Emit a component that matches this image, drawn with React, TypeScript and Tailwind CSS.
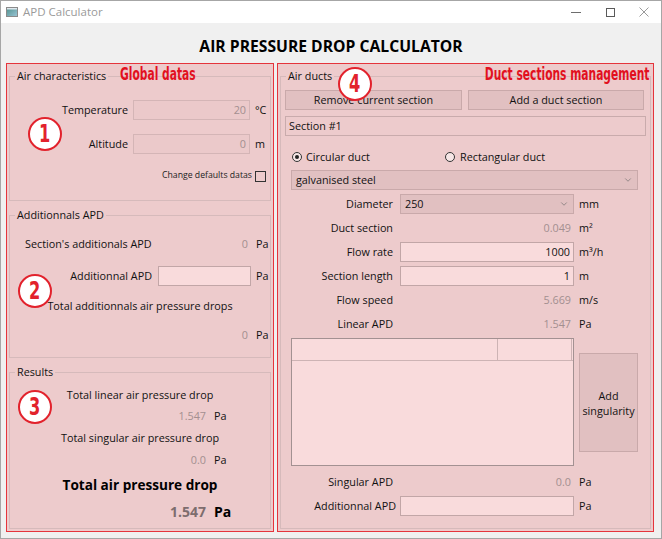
import React from "react";
import { ChevronDown } from "lucide-react";

// annotation bubble drawn over the form
function Bubble({ n, className }: { n: string; className: string }) {
  return (
    <div
      className={`absolute w-[34px] h-[34px] rounded-full border-2 border-[#e2222c] bg-white flex items-center justify-center text-[#e2222c] font-bold text-[24px] leading-none font-['Liberation_Sans_Narrow','DejaVu_Sans_Condensed',sans-serif] ${className}`}
    >
      <span className="scale-x-[0.75]">{n}</span>
    </div>
  );
}

function GroupBox({
  title,
  className = "",
  children,
}: {
  title: string;
  className?: string;
  children?: React.ReactNode;
}) {
  return (
    <fieldset className={`border border-[#d6babb] ${className}`}>
      <legend className="ml-[5px] px-[2px] leading-[16px]">{title}</legend>
      {children}
    </fieldset>
  );
}

const disabledBox =
  "h-[20px] border border-[#d4b5b6] bg-[#ebc9ca] text-right pr-[3px] text-[#a38f90] leading-[18px]";
const editBox =
  "h-[20px] border border-[#c2a6a7] bg-[#f9dbdc] text-right pr-[3px] leading-[18px]";
const comboBox =
  "h-[20px] border border-[#c9a9aa] bg-[#e1c0c1] flex items-center pl-[4px] pr-[4px] leading-[18px]";

export default function App() {
  return (
    <div className="w-[662px] h-[539px] border border-[#a6a6a6] bg-[#f0f0f0] flex flex-col text-[10.8px] text-[#111] font-['Open_Sans','Noto_Sans',sans-serif] overflow-hidden">
      {/* Title bar */}
      <div className="h-[22px] bg-white flex items-center shrink-0">
        <svg width="12" height="10" viewBox="0 0 12 10" className="ml-[5px]">
          <defs>
            <linearGradient id="ic" x1="0" y1="0" x2="1" y2="1">
              <stop offset="0" stopColor="#4d8f8a" />
              <stop offset="1" stopColor="#9cc6d8" />
            </linearGradient>
          </defs>
          <rect x="0.5" y="0.5" width="11" height="9" fill="url(#ic)" stroke="#8a8a8a" />
          <rect x="1" y="1" width="10" height="1.5" fill="#dfe8ee" />
        </svg>
        <span className="ml-[5px] text-[11.5px] text-[#9a9a9a]">APD Calculator</span>
        <div className="flex-1" />
        <div className="w-[34px] h-full flex items-center justify-center">
          <div className="w-[10px] h-px bg-[#6d6d6d]" />
        </div>
        <div className="w-[34px] h-full flex items-center justify-center">
          <div className="w-[9px] h-[9px] border border-[#5a5a5a]" />
        </div>
        <div className="w-[34px] h-full flex items-center justify-center">
          <svg width="10" height="10" viewBox="0 0 10 10">
            <path d="M0.5 0.5 L9.5 9.5 M9.5 0.5 L0.5 9.5" stroke="#9a9a9a" strokeWidth="1" />
          </svg>
        </div>
      </div>

      {/* Heading */}
      <div className="h-[40px] shrink-0 pt-[13px] text-center text-[15.7px] font-bold leading-[20px] text-black">
        AIR PRESSURE DROP CALCULATOR
      </div>

      <div className="flex pl-[5px] gap-[3px]">
        {/* Left column */}
        <div className="relative w-[268px] h-[469px] shrink-0 border border-[#e5343c] bg-[#edcbcc] px-[2px] pt-[4px] flex flex-col gap-[6px]">
          <GroupBox title="Air characteristics" className="h-[133px]">
            <div className="flex items-center h-[20px] mt-[16px]">
              <span className="w-[118px] text-right">Temperature</span>
              <div className={`ml-[5px] w-[117px] ${disabledBox}`}>20</div>
              <span className="ml-[5px]">°C</span>
            </div>
            <div className="flex items-center h-[20px] mt-[14px]">
              <span className="w-[118px] text-right">Altitude</span>
              <div className={`ml-[5px] w-[117px] ${disabledBox}`}>0</div>
              <span className="ml-[5px]">m</span>
            </div>
            <div className="flex items-center justify-end h-[14px] mt-[15px] pr-[4px]">
              <span className="text-[8.7px] text-[#222]">Change defaults datas</span>
              <div className="ml-[3px] w-[11px] h-[11px] border border-[#333]" />
            </div>
          </GroupBox>

          <GroupBox title="Additionnals APD" className="h-[151px]">
            <div className="flex items-center h-[20px] mt-[11px]">
              <span className="flex-1 pl-[15px]">Section's additionals APD</span>
              <span className="pr-[3px] text-[#a38f90]">0</span>
              <span className="ml-[5px] w-[14px]">Pa</span>
            </div>
            <div className="flex items-center justify-end h-[20px] mt-[12px]">
              <span>Additionnal APD</span>
              <div className={`ml-[6px] w-[93px] ${editBox}`} />
              <span className="ml-[5px] w-[14px]">Pa</span>
            </div>
            <div className="h-[16px] mt-[12px] leading-[16px] text-center">
              Total additionnals air pressure drops
            </div>
            <div className="flex items-center justify-end h-[20px] mt-[11px]">
              <span className="pr-[3px] text-[#a38f90]">0</span>
              <span className="ml-[5px] w-[14px]">Pa</span>
            </div>
          </GroupBox>

          <GroupBox title="Results" className="h-[165px]">
            <div className="h-[16px] mt-[7px] leading-[16px] text-center">
              Total linear air pressure drop
            </div>
            <div className="flex items-center justify-end h-[16px] mt-[5px] pr-[42px]">
              <span className="text-[#a38f90]">1.547</span>
              <span className="ml-[8px] w-[14px]">Pa</span>
            </div>
            <div className="h-[16px] mt-[6px] leading-[16px] text-center">
              Total singular air pressure drop
            </div>
            <div className="flex items-center justify-end h-[16px] mt-[6px] pr-[42px]">
              <span className="text-[#a38f90]">0.0</span>
              <span className="ml-[8px] w-[14px]">Pa</span>
            </div>
            <div className="h-[20px] mt-[7px] leading-[20px] text-center text-[13.6px] font-bold text-black">
              Total air pressure drop
            </div>
            <div className="flex items-center justify-end h-[20px] mt-[6px] pr-[40px] text-[14px] font-bold">
              <span className="text-[#7d6d6e]">1.547</span>
              <span className="ml-[8px] w-[16px] text-black">Pa</span>
            </div>
          </GroupBox>

          <span className="absolute left-[113px] top-[0px] origin-left scale-x-[0.66] whitespace-nowrap text-[18px] leading-[20px] font-bold text-[#e2101e] font-['Liberation_Sans_Narrow','DejaVu_Sans_Condensed',sans-serif]">
            Global datas
          </span>
          <Bubble n="1" className="left-[21px] top-[53px]" />
          <Bubble n="2" className="left-[11px] top-[210px]" />
          <Bubble n="3" className="left-[11px] top-[326px]" />
        </div>

        {/* Right column */}
        <div className="relative w-[377px] h-[469px] shrink-0 border border-[#e5343c] bg-[#edcbcc] px-[2px] pt-[4px]">
          <GroupBox title="Air ducts" className="h-[461px]">
            <div className="flex mt-[6px] pl-[4px]">
              <div className="w-[177px] h-[20px] border border-[#c9a9aa] bg-[#e1c0c1] text-center leading-[18px]">
                Remove current section
              </div>
              <div className="ml-[6px] w-[176px] h-[20px] border border-[#c9a9aa] bg-[#e1c0c1] text-center leading-[18px]">
                Add a duct section
              </div>
            </div>
            <div className="ml-[4px] mt-[6px] w-[361px] h-[20px] border border-[#c9abac] pl-[3px] leading-[18px]">
              Section #1
            </div>

            <div className="flex items-center h-[16px] mt-[13px] pl-[11px]">
              <div className="w-[153px] flex items-center">
                <div className="w-[10px] h-[10px] rounded-full border border-[#333] bg-[#f6e6e6] flex items-center justify-center">
                  <div className="w-[4px] h-[4px] rounded-full bg-[#222]" />
                </div>
                <span className="ml-[4px]">Circular duct</span>
              </div>
              <div className="w-[10px] h-[10px] rounded-full border border-[#333] bg-[#f6e6e6]" />
              <span className="ml-[5px]">Rectangular duct</span>
            </div>

            <div className={`ml-[10px] mt-[5px] w-[347px] ${comboBox}`}>
              <span className="flex-1">galvanised steel</span>
              <ChevronDown size={10} strokeWidth={1.5} className="text-[#666]" />
            </div>

            <div className="flex items-center h-[20px] mt-[4px] pl-[10px]">
              <span className="w-[102px] text-right">Diameter</span>
              <div className={`ml-[7px] w-[174px] ${comboBox}`}>
                <span className="flex-1">250</span>
                <ChevronDown size={10} strokeWidth={1.5} className="text-[#666]" />
              </div>
              <span className="ml-[5px]">mm</span>
            </div>
            <div className="flex items-center h-[20px] mt-[4px] pl-[10px]">
              <span className="w-[102px] text-right">Duct section</span>
              <span className="ml-[7px] w-[174px] text-right pr-[3px] text-[#a38f90]">0.049</span>
              <span className="ml-[5px]">m²</span>
            </div>
            <div className="flex items-center h-[20px] mt-[4px] pl-[10px]">
              <span className="w-[102px] text-right">Flow rate</span>
              <div className={`ml-[7px] w-[174px] ${editBox}`}>1000</div>
              <span className="ml-[5px]">m³/h</span>
            </div>
            <div className="flex items-center h-[20px] mt-[4px] pl-[10px]">
              <span className="w-[102px] text-right">Section length</span>
              <div className={`ml-[7px] w-[174px] ${editBox}`}>1</div>
              <span className="ml-[5px]">m</span>
            </div>
            <div className="flex items-center h-[20px] mt-[4px] pl-[10px]">
              <span className="w-[102px] text-right">Flow speed</span>
              <span className="ml-[7px] w-[174px] text-right pr-[3px] text-[#a38f90]">5.669</span>
              <span className="ml-[5px]">m/s</span>
            </div>
            <div className="flex items-center h-[20px] mt-[4px] pl-[10px]">
              <span className="w-[102px] text-right">Linear APD</span>
              <span className="ml-[7px] w-[174px] text-right pr-[3px] text-[#a38f90]">1.547</span>
              <span className="ml-[5px]">Pa</span>
            </div>

            <div className="flex items-start mt-[4px] pl-[10px]">
              <div className="w-[283px] h-[128px] border border-[#a39192] bg-[#f9dbdc]">
                <div className="flex h-[22px] border-b border-[#cdb3b4]">
                  <div className="w-[206px] border-r border-[#cdb3b4]" />
                  <div className="w-[74px] border-r border-[#cdb3b4]" />
                </div>
              </div>
              <div className="ml-[5px] mt-[15px] w-[59px] h-[99px] border border-[#c9a9aa] bg-[#e1c0c1] flex items-center justify-center text-center leading-[15px]">
                Add
                <br />
                singularity
              </div>
            </div>

            <div className="flex items-center h-[20px] mt-[6px] pl-[10px]">
              <span className="w-[102px] text-right">Singular APD</span>
              <span className="ml-[7px] w-[174px] text-right pr-[3px] text-[#a38f90]">0.0</span>
              <span className="ml-[5px]">Pa</span>
            </div>
            <div className="flex items-center h-[20px] mt-[4px] pl-[10px]">
              <span className="w-[105px] text-right whitespace-nowrap">Additionnal APD</span>
              <div className={`ml-[4px] w-[174px] ${editBox}`} />
              <span className="ml-[5px]">Pa</span>
            </div>
          </GroupBox>

          <span className="absolute right-[4px] top-[0px] origin-right scale-x-[0.66] whitespace-nowrap text-[18px] leading-[20px] font-bold text-[#e2101e] font-['Liberation_Sans_Narrow','DejaVu_Sans_Condensed',sans-serif]">
            Duct sections management
          </span>
          <Bubble n="4" className="left-[60px] top-[3px]" />
        </div>
      </div>
    </div>
  );
}
